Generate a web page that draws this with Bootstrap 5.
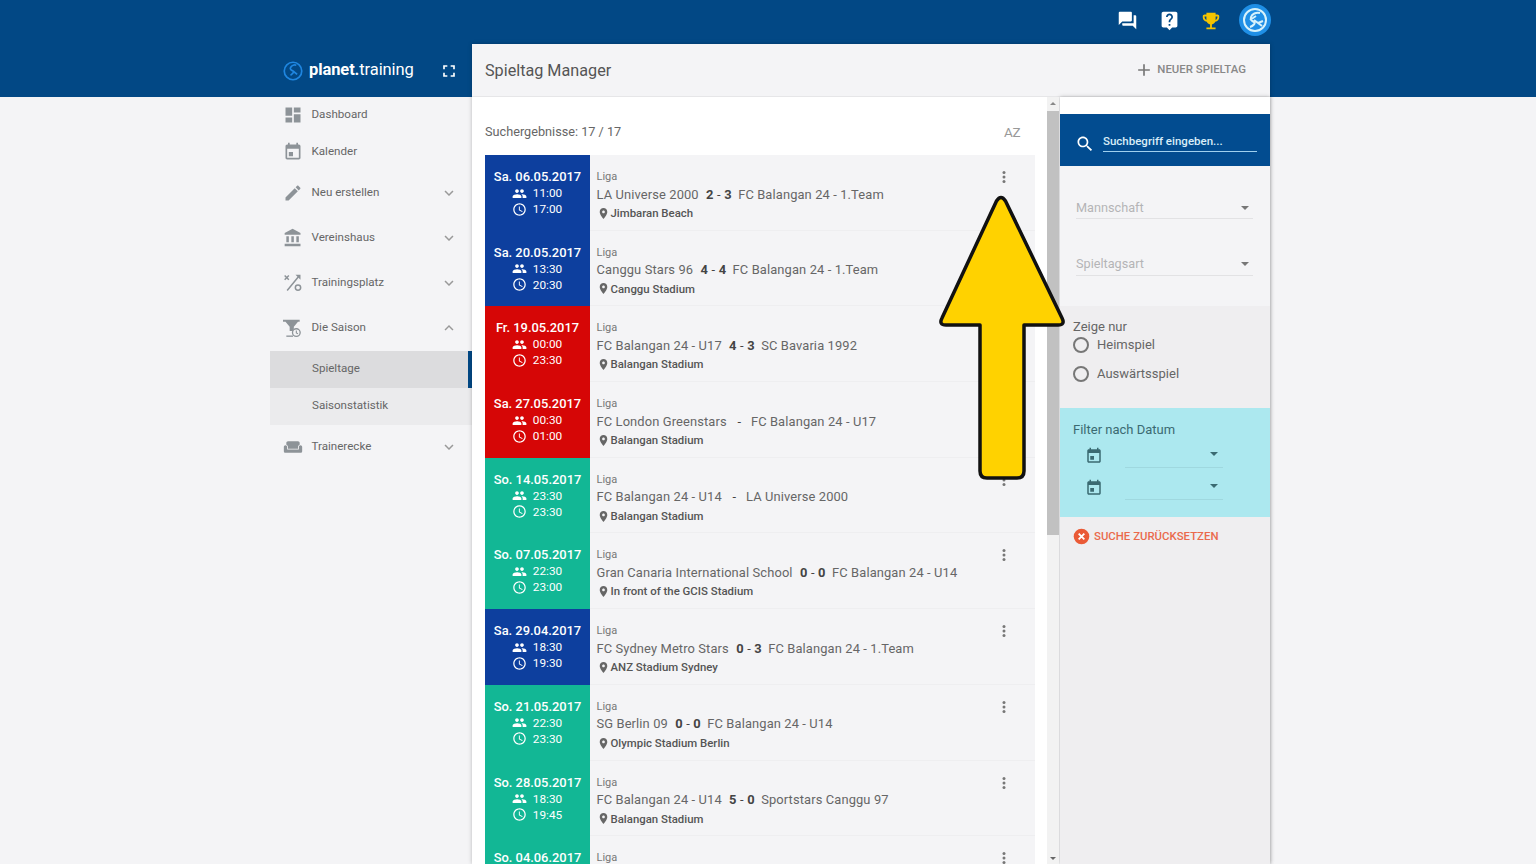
<!DOCTYPE html>
<html lang="de">
<head>
<meta charset="utf-8">
<title>Spieltag Manager</title>
<link href="https://cdn.jsdelivr.net/npm/bootstrap@5.3.0/dist/css/bootstrap.min.css" rel="stylesheet">
<style>
html,body{height:864px;overflow:hidden}
body{font-family:Roboto,"Liberation Sans",sans-serif;color:#616161;font-size:13px;background:linear-gradient(#024885 0,#024885 97px,#f4f4f6 97px)}
.shell{width:1000px;margin-left:270px;height:864px}
.topbar{height:44px}
.topicon{width:42px;height:40px;margin-bottom:3px}
.topicon.lastic{margin-right:7px}
.avatar{width:32px;height:32px;margin:0 -1px 4px 0;border-radius:50%;background:#1f8fe6}
.sidebar{width:202px}
.brand{height:53px;padding-left:13px;padding-right:13px}
.brandname{font-size:16.5px;color:#fff;margin-left:6px;font-weight:400;letter-spacing:-.1px;margin-top:0}
.brandname b{font-weight:700}
.navi{color:#666;font-size:11.6px;padding:0 14px 0 13px}
.navi .lbl{margin-left:8.5px}
.navi svg.ic{width:20px;height:20px;fill:#8d9398;flex:none}
.navi svg.chev{width:18px;height:18px;fill:#999;margin-left:auto;margin-right:0;flex:none}
.h35{height:36px}.h37{height:37.5px}.h45{height:45px}
.subitem{height:37px;padding-left:42px;background:#ebebed;font-size:11.6px;color:#666}
.subitem.on{background:#dcdcde;border-right:4px solid #024885}
.mainwrap{width:798px;box-shadow:0 0 4px rgba(0,0,0,.25)}
.mainhead{height:53px;background:#f4f4f6;padding:0 24px 0 13px;border-bottom:1px solid #e6e6e8}
.mainhead h1{font-size:16.2px;font-weight:400;color:#555;margin:2px 0 0}
.newbtn{font-size:11.4px;font-weight:500;color:#888}
.newbtn svg{width:20px;height:20px;fill:#777;margin-right:3px}
.content{height:767px}
.listpane{width:587px;background:#fff;overflow:hidden}
.listcol{width:575px;padding-left:13px;padding-right:12px}
.resbar{height:58px;padding-right:14px;padding-top:12px}
.restext{font-size:12.7px;color:#666}
.aztxt{font-size:13.5px;color:#999;letter-spacing:-.5px;padding-right:1px}
.gamerow{height:75.7px;background:#f4f4f6}
.datebox{width:105px;color:#fff;font-size:12.9px;font-weight:500;text-align:center;flex:none;padding-top:14px;line-height:16px}
.datebox .tm{font-size:11.8px;font-weight:400;display:flex;justify-content:center;align-items:center;gap:6px;height:16px;padding-right:1px}
.datebox svg{width:15px;height:15px;fill:#fff}
.dblue{background:#0d3f9e}.dred{background:#d60606}.dteal{background:#12b795}
.gameinfo{padding:13px 0 0 6.5px;line-height:18.5px;flex-grow:1;border-bottom:1px solid #eeeef0}
.liga{font-size:11px;color:#777}
.teams{font-size:12.9px;color:#666;letter-spacing:.12px;line-height:19px;margin-top:-2px}
.teams b{font-weight:700;color:#444;margin:0 3px 0 4px;letter-spacing:.2px}
.teams b span{font-weight:400}
.ort{font-size:11.4px;font-weight:500;color:#555;display:flex;align-items:center;margin-top:.5px}
.ort svg{width:13px;height:13px;fill:#666;margin-right:1px}
.kebab{width:30px;padding-top:13px;padding-right:22.5px;flex:none;box-sizing:content-box;border-bottom:1px solid #eeeef0}
.kebab svg{width:18px;height:18px;fill:#777;display:block;margin-left:auto}
.scrolltrack{width:12px;background:#f2f2f2;position:relative}
.thumb{width:12px;height:424px;background:#c1c1c1;margin-top:14px}
.scrollup,.scrolldown{height:0;width:0;border-left:3px solid transparent;border-right:3px solid transparent;margin:0 auto}
.scrollup{border-bottom:3px solid #888;margin-top:5px;margin-bottom:-8px}
.scrolldown{border-top:3px solid #666;margin-top:322px}
.filterpane{width:210px;margin-left:1px;background:#efeef0;box-shadow:0 0 4px rgba(0,0,0,.25);height:767px}
.whitegap{height:17px;background:#fff}
.searchbox{height:52px;background:#024c90;padding:0 13px 0 15px}
.searchbox svg{width:20px;height:20px;fill:#fff;flex:none;margin-top:8px}
.searchline{margin-left:8px;width:154px;border-bottom:1px solid #9fd0ee;color:#d8edf8;font-size:11.5px;font-weight:500;height:24px;line-height:26px;padding-left:0}
.selects{height:140px;padding:19px 17px 0 16px;background:#f4f4f6}
.sel{height:34px;border-bottom:1px solid #e2e2e4;color:#b4b4b6;font-size:12.7px;margin-bottom:22.5px;padding-top:12px;padding-right:4px;display:flex;justify-content:space-between;align-items:center}
.caret{width:0;height:0;border-left:4px solid transparent;border-right:4px solid transparent;border-top:4px solid #777;flex:none}
.zeige{height:102px;padding:13px 13px 0}
.zeige .ttl{font-size:13px;line-height:16px;color:#666;margin-bottom:-4.5px}
.radio{display:flex;align-items:center;gap:8px;height:29px;font-size:13px;color:#666}
.radio i{display:block;width:16px;height:16px;border:2px solid #777;border-radius:50%}
.datumbox{height:109px;background:#ace8ef;padding:12px 13px 0;color:#3b6a72;font-size:13px}
.dline{display:flex;align-items:center;height:32px;padding-left:12px}
.dline svg{width:18px;height:18px;fill:#3a6a72;flex:none}
.dfield{width:98px;margin-left:22px;height:24px;border-bottom:1px solid #9fd8df;display:flex;justify-content:flex-end;align-items:center;padding-right:5px;margin-bottom:0;margin-top:1px}
.dfield .caret{border-top-color:#3a6a72;margin-bottom:3px}
.resetlink{height:39px;padding-left:13px;color:#ea6a4c;font-size:11.4px;font-weight:500;gap:4px}
.resetlink svg{width:17px;height:17px}
.bigarrow{position:absolute;left:938px;top:194px;width:128px;height:288px;z-index:5}
</style>
</head>
<body>
<svg width="0" height="0" class="position-absolute">
<defs>
<symbol id="i-dash" viewBox="0 0 24 24"><path d="M3 13h8V3H3v10zm0 8h8v-6H3v6zm10 0h8V11h-8v10zm0-18v6h8V3h-8z"/></symbol>
<symbol id="i-event" viewBox="0 0 24 24"><path d="M12 12H7v5h5v-5zM16 1v2H8V1H6v2H5c-1.11 0-1.99.9-1.99 2L3 19c0 1.1.89 2 2 2h14c1.1 0 2-.9 2-2V5c0-1.1-.9-2-2-2h-1V1h-2zm3 18H5V8h14v11z"/></symbol>
<symbol id="i-edit" viewBox="0 0 24 24"><path d="M3 17.25V21h3.75L17.81 9.94l-3.75-3.75L3 17.25zM20.71 7.04c.39-.39.39-1.02 0-1.41l-2.34-2.34c-.39-.39-1.02-.39-1.41 0l-1.83 1.83 3.75 3.75 1.83-1.83z"/></symbol>
<symbol id="i-bank" viewBox="0 0 24 24"><path d="M4 10v7h3v-7H4zm6 0v7h3v-7h-3zM2 22h19v-3H2v3zm14-12v7h3v-7h-3zm-4.5-9L2 6v2h19V6l-9.5-5z"/></symbol>
<symbol id="i-tactic" viewBox="0 0 24 24"><path d="M2 3l5 5M7 3L2 8M19 4L5 21" fill="none" stroke="#8d9398" stroke-width="1.8"/><circle cx="18" cy="17.500" r="3.200" fill="none" stroke="#8d9398" stroke-width="1.8"/><path d="M15 2h6v6z"/></symbol>
<symbol id="i-season" viewBox="0 0 24 24"><path d="M0 2h20v2.500h-2l-5 6v5H8v-5l-5-6H0z"/><circle cx="16" cy="17.500" r="4.600" fill="#f4f4f6" stroke="#8d9398" stroke-width="1.600"/><path d="M16 15v3l2 1" fill="none" stroke="#8d9398" stroke-width="1.300"/><path d="M4 21h8v1.600H4z"/></symbol>
<symbol id="i-sofa" viewBox="0 0 24 24"><path d="M21 10c-1.1 0-2 .9-2 2v3H5v-3c0-1.1-.9-2-2-2s-2 .9-2 2v5c0 1.1.9 2 2 2h18c1.1 0 2-.9 2-2v-5c0-1.1-.9-2-2-2zm-3-5H6c-1.1 0-2 .9-2 2v2.150c1.160.410 2 1.510 2 2.820V14h12v-2.030c0-1.300.840-2.400 2-2.820V7c0-1.100-.9-2-2-2z"/></symbol>
<symbol id="i-down" viewBox="0 0 24 24"><path d="M16.59 8.59L12 13.17 7.41 8.59 6 10l6 6 6-6z"/></symbol>
<symbol id="i-up" viewBox="0 0 24 24"><path d="M12 8l-6 6 1.41 1.41L12 10.83l4.59 4.58L18 14z"/></symbol>
<symbol id="i-people" viewBox="0 0 24 24"><path d="M16 11c1.66 0 2.99-1.34 2.99-3S17.66 5 16 5c-1.66 0-3 1.34-3 3s1.34 3 3 3zm-8 0c1.66 0 2.99-1.34 2.99-3S9.66 5 8 5C6.34 5 5 6.34 5 8s1.34 3 3 3zm0 2c-2.33 0-7 1.17-7 3.5V19h14v-2.5c0-2.33-4.67-3.5-7-3.5zm8 0c-.29 0-.62.02-.97.05 1.16.84 1.97 1.97 1.97 3.45V19h6v-2.5c0-2.33-4.67-3.5-7-3.5z"/></symbol>
<symbol id="i-clock" viewBox="0 0 24 24"><path d="M11.99 2C6.47 2 2 6.48 2 12s4.47 10 9.99 10C17.52 22 22 17.52 22 12S17.52 2 11.99 2zM12 20c-4.42 0-8-3.58-8-8s3.58-8 8-8 8 3.58 8 8-3.58 8-8 8zm.5-13H11v6l5.25 3.15.75-1.23-4.5-2.67z"/></symbol>
<symbol id="i-place" viewBox="0 0 24 24"><path d="M12 2C8.13 2 5 5.13 5 9c0 5.25 7 13 7 13s7-7.75 7-13c0-3.87-3.13-7-7-7zm0 9.5c-1.38 0-2.5-1.12-2.5-2.5s1.12-2.5 2.5-2.5 2.5 1.12 2.5 2.5-1.12 2.5-2.5 2.5z"/></symbol>
<symbol id="i-more" viewBox="0 0 24 24"><circle cx="12" cy="6" r="2"/><circle cx="12" cy="12" r="2"/><circle cx="12" cy="18" r="2"/></symbol>
</defs>
</svg>

<div class="shell">
  <div class="topbar d-flex justify-content-end align-items-center">
    <div class="topicon d-flex align-items-center justify-content-center"><svg width="21" height="21" viewBox="0 0 24 24" fill="#fff"><path d="M21 6h-2v9H6v2c0 .55.45 1 1 1h11l4 4V7c0-.55-.45-1-1-1zm-4 6V3c0-.55-.45-1-1-1H3c-.55 0-1 .45-1 1v14l4-4h10c.55 0 1-.45 1-1z"/></svg></div>
    <div class="topicon d-flex align-items-center justify-content-center"><svg width="21" height="21" viewBox="0 0 24 24" fill="#fff"><path d="M19 2H5c-1.11 0-2 .9-2 2v14c0 1.1.89 2 2 2h4l3 3 3-3h4c1.1 0 2-.9 2-2V4c0-1.1-.9-2-2-2zm-6 16h-2v-2h2v2zm2.07-7.75l-.9.92C13.45 11.9 13 12.5 13 14h-2v-.5c0-1.1.45-2.1 1.17-2.83l1.24-1.26c.37-.36.59-.86.59-1.41 0-1.1-.9-2-2-2s-2 .9-2 2H8c0-2.21 1.79-4 4-4s4 1.79 4 4c0 .88-.36 1.68-.93 2.25z"/></svg></div>
    <div class="topicon lastic d-flex align-items-center justify-content-center"><svg width="22" height="22" viewBox="0 0 24 24" fill="#f5c400"><path d="M19 5h-2V3H7v2H5c-1.1 0-2 .9-2 2v1c0 2.55 1.92 4.63 4.39 4.94.63 1.5 1.98 2.63 3.61 2.96V19H7v2h10v-2h-4v-3.1c1.63-.33 2.98-1.46 3.61-2.96C19.08 12.63 21 10.55 21 8V7c0-1.1-.9-2-2-2zM5 8V7h2v3.82C5.84 10.4 5 9.3 5 8zm14 0c0 1.3-.84 2.4-2 2.82V7h2v1z"/></svg></div>
    <div class="avatar d-flex align-items-center justify-content-center"><svg width="26" height="26" viewBox="0 0 26 26" fill="none" stroke="#d7f2fb" stroke-width="2"><circle cx="13" cy="13" r="11"/><path d="M18 6c-4-1-8 1-9 4s1 4 3 5-1 4-4 5M8 13l6-4M12 13l8 6M16 16l5-2"/></svg></div>
  </div>

  <div class="d-flex">
    <div class="sidebar flex-none">
      <div class="brand d-flex align-items-center">
        <svg width="20" height="20" viewBox="0 0 24 24" fill="none" stroke="#1f86e0" stroke-width="2"><circle cx="12" cy="12" r="10.500"/><path d="M16 5c-3-1-6 1-7 3s1 3 3 4-1 4-3 5M12 12l5 4"/></svg>
        <div class="brandname"><b>planet.</b>training</div>
        <svg class="ms-auto" width="20" height="20" viewBox="0 0 24 24" fill="#fff"><path d="M7 14H5v5h5v-2H7v-3zm-2-4h2V7h3V5H5v5zm12 7h-3v2h5v-5h-2v3zM14 5v2h3v3h2V5h-5z"/></svg>
      </div>
      <div class="navi h35 d-flex align-items-center"><svg class="ic"><use href="#i-dash"/></svg><span class="lbl">Dashboard</span></div>
      <div class="navi h37 d-flex align-items-center"><svg class="ic"><use href="#i-event"/></svg><span class="lbl">Kalender</span></div>
      <div class="navi h45 d-flex align-items-center"><svg class="ic"><use href="#i-edit"/></svg><span class="lbl">Neu erstellen</span><svg class="chev"><use href="#i-down"/></svg></div>
      <div class="navi h45 d-flex align-items-center"><svg class="ic"><use href="#i-bank"/></svg><span class="lbl">Vereinshaus</span><svg class="chev"><use href="#i-down"/></svg></div>
      <div class="navi h45 d-flex align-items-center"><svg class="ic"><use href="#i-tactic"/></svg><span class="lbl">Trainingsplatz</span><svg class="chev"><use href="#i-down"/></svg></div>
      <div class="navi h45 d-flex align-items-center"><svg class="ic"><use href="#i-season"/></svg><span class="lbl">Die Saison</span><svg class="chev"><use href="#i-up"/></svg></div>
      <div class="subitem on d-flex align-items-center">Spieltage</div>
      <div class="subitem d-flex align-items-center">Saisonstatistik</div>
      <div class="navi h45 d-flex align-items-center"><svg class="ic"><use href="#i-sofa"/></svg><span class="lbl">Trainerecke</span><svg class="chev"><use href="#i-down"/></svg></div>
    </div>

    <div class="mainwrap">
      <div class="mainhead d-flex align-items-center justify-content-between">
        <h1>Spieltag Manager</h1>
        <div class="newbtn d-flex align-items-center"><svg viewBox="0 0 24 24"><path d="M19 13h-6v6h-2v-6H5v-2h6V5h2v6h6v2z"/></svg>NEUER SPIELTAG</div>
      </div>
      <div class="content d-flex">
        <div class="listpane d-flex">
          <div class="listcol">
            <div class="resbar d-flex justify-content-between align-items-center"><span class="restext">Suchergebnisse: 17 / 17</span><span class="aztxt">AZ</span></div>

            <div class="gamerow d-flex"><div class="datebox dblue">Sa. 06.05.2017<div class="tm"><svg><use href="#i-people"/></svg>11:00</div><div class="tm"><svg><use href="#i-clock"/></svg>17:00</div></div><div class="gameinfo"><div class="liga">Liga</div><div class="teams">LA Universe 2000 <b>2 <span>-</span> 3</b> FC Balangan 24 - 1.Team</div><div class="ort"><svg><use href="#i-place"/></svg>Jimbaran Beach</div></div><div class="kebab"><svg><use href="#i-more"/></svg></div></div>

            <div class="gamerow d-flex"><div class="datebox dblue">Sa. 20.05.2017<div class="tm"><svg><use href="#i-people"/></svg>13:30</div><div class="tm"><svg><use href="#i-clock"/></svg>20:30</div></div><div class="gameinfo"><div class="liga">Liga</div><div class="teams">Canggu Stars 96 <b>4 <span>-</span> 4</b> FC Balangan 24 - 1.Team</div><div class="ort"><svg><use href="#i-place"/></svg>Canggu Stadium</div></div><div class="kebab"><svg><use href="#i-more"/></svg></div></div>

            <div class="gamerow d-flex"><div class="datebox dred">Fr. 19.05.2017<div class="tm"><svg><use href="#i-people"/></svg>00:00</div><div class="tm"><svg><use href="#i-clock"/></svg>23:30</div></div><div class="gameinfo"><div class="liga">Liga</div><div class="teams">FC Balangan 24 - U17 <b>4 <span>-</span> 3</b> SC Bavaria 1992</div><div class="ort"><svg><use href="#i-place"/></svg>Balangan Stadium</div></div><div class="kebab"><svg><use href="#i-more"/></svg></div></div>

            <div class="gamerow d-flex"><div class="datebox dred">Sa. 27.05.2017<div class="tm"><svg><use href="#i-people"/></svg>00:30</div><div class="tm"><svg><use href="#i-clock"/></svg>01:00</div></div><div class="gameinfo"><div class="liga">Liga</div><div class="teams">FC London Greenstars <b><span>&nbsp;-&nbsp;</span></b> FC Balangan 24 - U17</div><div class="ort"><svg><use href="#i-place"/></svg>Balangan Stadium</div></div><div class="kebab"><svg><use href="#i-more"/></svg></div></div>

            <div class="gamerow d-flex"><div class="datebox dteal">So. 14.05.2017<div class="tm"><svg><use href="#i-people"/></svg>23:30</div><div class="tm"><svg><use href="#i-clock"/></svg>23:30</div></div><div class="gameinfo"><div class="liga">Liga</div><div class="teams">FC Balangan 24 - U14 <b><span>&nbsp;-&nbsp;</span></b> LA Universe 2000</div><div class="ort"><svg><use href="#i-place"/></svg>Balangan Stadium</div></div><div class="kebab"><svg><use href="#i-more"/></svg></div></div>

            <div class="gamerow d-flex"><div class="datebox dteal">So. 07.05.2017<div class="tm"><svg><use href="#i-people"/></svg>22:30</div><div class="tm"><svg><use href="#i-clock"/></svg>23:00</div></div><div class="gameinfo"><div class="liga">Liga</div><div class="teams">Gran Canaria International School <b>0 <span>-</span> 0</b> FC Balangan 24 - U14</div><div class="ort"><svg><use href="#i-place"/></svg>In front of the GCIS Stadium</div></div><div class="kebab"><svg><use href="#i-more"/></svg></div></div>

            <div class="gamerow d-flex"><div class="datebox dblue">Sa. 29.04.2017<div class="tm"><svg><use href="#i-people"/></svg>18:30</div><div class="tm"><svg><use href="#i-clock"/></svg>19:30</div></div><div class="gameinfo"><div class="liga">Liga</div><div class="teams">FC Sydney Metro Stars <b>0 <span>-</span> 3</b> FC Balangan 24 - 1.Team</div><div class="ort"><svg><use href="#i-place"/></svg>ANZ Stadium Sydney</div></div><div class="kebab"><svg><use href="#i-more"/></svg></div></div>

            <div class="gamerow d-flex"><div class="datebox dteal">So. 21.05.2017<div class="tm"><svg><use href="#i-people"/></svg>22:30</div><div class="tm"><svg><use href="#i-clock"/></svg>23:30</div></div><div class="gameinfo"><div class="liga">Liga</div><div class="teams">SG Berlin 09 <b>0 <span>-</span> 0</b> FC Balangan 24 - U14</div><div class="ort"><svg><use href="#i-place"/></svg>Olympic Stadium Berlin</div></div><div class="kebab"><svg><use href="#i-more"/></svg></div></div>

            <div class="gamerow d-flex"><div class="datebox dteal">So. 28.05.2017<div class="tm"><svg><use href="#i-people"/></svg>18:30</div><div class="tm"><svg><use href="#i-clock"/></svg>19:45</div></div><div class="gameinfo"><div class="liga">Liga</div><div class="teams">FC Balangan 24 - U14 <b>5 <span>-</span> 0</b> Sportstars Canggu 97</div><div class="ort"><svg><use href="#i-place"/></svg>Balangan Stadium</div></div><div class="kebab"><svg><use href="#i-more"/></svg></div></div>

            <div class="gamerow d-flex"><div class="datebox dteal">So. 04.06.2017</div><div class="gameinfo"><div class="liga">Liga</div></div><div class="kebab"><svg><use href="#i-more"/></svg></div></div>
          </div>
          <div class="scrolltrack">
            <div class="scrollup"></div>
            <div class="thumb"></div>
            <div class="scrolldown"></div>
          </div>
        </div>

        <div class="filterpane">
          <div class="whitegap"></div>
          <div class="searchbox d-flex align-items-center">
            <svg viewBox="0 0 24 24"><path d="M15.5 14h-.79l-.28-.27C15.41 12.59 16 11.11 16 9.5 16 5.91 13.09 3 9.5 3S3 5.91 3 9.5 5.91 16 9.5 16c1.61 0 3.09-.59 4.23-1.57l.27.28v.79l5 4.99L20.49 19l-4.99-5zm-6 0C7.01 14 5 11.99 5 9.5S7.01 5 9.5 5 14 7.01 14 9.5 11.99 14 9.5 14z"/></svg>
            <div class="searchline">Suchbegriff eingeben...</div>
          </div>
          <div class="selects">
            <div class="sel">Mannschaft<span class="caret"></span></div>
            <div class="sel">Spieltagsart<span class="caret"></span></div>
          </div>
          <div class="zeige">
            <div class="ttl">Zeige nur</div>
            <div class="radio"><i></i>Heimspiel</div>
            <div class="radio"><i></i>Auswärtsspiel</div>
          </div>
          <div class="datumbox">
            <div>Filter nach Datum</div>
            <div class="dline"><svg viewBox="0 0 24 24"><use href="#i-event"/></svg><div class="dfield"><span class="caret"></span></div></div>
            <div class="dline"><svg viewBox="0 0 24 24"><use href="#i-event"/></svg><div class="dfield"><span class="caret"></span></div></div>
          </div>
          <div class="resetlink d-flex align-items-center"><svg viewBox="0 0 24 24"><circle cx="12" cy="12" r="11" fill="#ea5a36"/><path d="M8 8l8 8M16 8l-8 8" stroke="#fff" stroke-width="2.6"/></svg>SUCHE ZURÜCKSETZEN</div>
        </div>
      </div>
    </div>
  </div>
</div>

<svg class="bigarrow" viewBox="0 0 128 288"><path d="M58.500 7 Q63 0 67.500 7 L124 124 Q127.500 131 120 131 H86 V277 Q86 284 79 284 H49 Q42 284 42 277 V131 H8 Q0.500 131 4 124 Z" fill="#ffd200" stroke="#111" stroke-width="3.500" stroke-linejoin="round"/></svg>
<script src="https://cdn.jsdelivr.net/npm/bootstrap@5.3.0/dist/js/bootstrap.bundle.min.js"></script>
</body>
</html>
